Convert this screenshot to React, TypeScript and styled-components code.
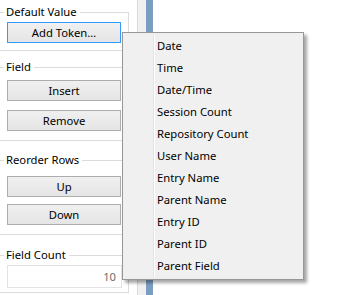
import React from 'react';
import styled, { createGlobalStyle } from 'styled-components';

const Global = createGlobalStyle`
  html, body {
    margin: 0;
    padding: 0;
    overflow: hidden;
    background: #fff;
  }
  body {
    font-family: 'Noto Sans', 'Open Sans', sans-serif;
    font-size: 11.25px;
    color: #000;
  }
`;

const TOKENS = [
  'Date',
  'Time',
  'Date/Time',
  'Session Count',
  'Repository Count',
  'User Name',
  'Entry Name',
  'Parent Name',
  'Entry ID',
  'Parent ID',
  'Parent Field',
];

export default function App() {
  return (
    <>
      <Global />
      <Screen>
        <SidePanel>
          <Group $mt={0}>
            <GroupTitle>
              <span>Default Value</span>
            </GroupTitle>
            <GroupBody $pt={2} $pb={7} $gap={0}>
              <Button $focused>Add Token…</Button>
            </GroupBody>
          </Group>

          <Group $mt={8}>
            <GroupTitle>
              <span>Field</span>
            </GroupTitle>
            <GroupBody $pt={5} $pb={9} $gap={9}>
              <Button>Insert</Button>
              <Button>Remove</Button>
            </GroupBody>
          </Group>

          <Group $mt={11}>
            <GroupTitle>
              <span>Reorder Rows</span>
            </GroupTitle>
            <GroupBody $pt={8} $pb={9} $gap={7}>
              <Button>Up</Button>
              <Button>Down</Button>
            </GroupBody>
          </Group>

          <Group $mt={12}>
            <GroupTitle>
              <span>Field Count</span>
            </GroupTitle>
            <GroupBody $pt={2} $pb={4} $gap={0}>
              <CountInput>10</CountInput>
            </GroupBody>
          </Group>
        </SidePanel>
        <Gutter />
        <SplitBar />
        <Canvas />

        <Menu>
          <MenuList>
            {TOKENS.map((t) => (
              <MenuItem key={t}>{t}</MenuItem>
            ))}
          </MenuList>
        </Menu>
      </Screen>
    </>
  );
}

const Screen = styled.div`
  position: relative;
  display: flex;
  width: 342px;
  height: 295px;
  overflow: hidden;
`;

const SidePanel = styled.div`
  flex: 0 0 137px;
  padding-top: 4px;
  background: #fff;
  border-right: 1px solid #d9d9d9;
`;

const Gutter = styled.div`
  flex: 0 0 8px;
  background: #f0f0f0;
`;

const SplitBar = styled.div`
  flex: 0 0 7px;
  background: #7b9ec0;
`;

const Canvas = styled.div`
  flex: 1;
  background: #fff;
`;

const Group = styled.div<{ $mt: number }>`
  width: 129px;
  margin-top: ${({ $mt }) => $mt}px;
`;

const GroupTitle = styled.div`
  display: flex;
  height: 16px;
  line-height: 16px;
  white-space: nowrap;

  &::before {
    content: '';
    flex: 0 0 4px;
    margin-top: 8px;
    border-top: 1px solid #dcdcdc;
  }

  span {
    padding: 0 3px 0 2px;
  }

  &::after {
    content: '';
    flex: 1;
    margin-top: 8px;
    border-top: 1px solid #dcdcdc;
    border-right: 1px solid #dcdcdc;
  }
`;

const GroupBody = styled.div<{ $pt: number; $pb: number; $gap: number }>`
  display: flex;
  flex-direction: column;
  gap: ${({ $gap }) => $gap}px;
  padding: ${({ $pt }) => $pt}px 0 ${({ $pb }) => $pb}px 7px;
  border-right: 1px solid #dcdcdc;
  border-bottom: 1px solid #dcdcdc;
`;

const Button = styled.button<{ $focused?: boolean }>`
  box-sizing: border-box;
  width: 114px;
  height: 21px;
  padding: 0;
  border: 1px solid ${({ $focused }) => ($focused ? '#3399ff' : '#adadad')};
  border-radius: 0;
  background: linear-gradient(#f0f0f0, #e5e5e5);
  font: inherit;
  color: #000;
  line-height: 19px;
  text-align: center;
`;

const CountInput = styled.div`
  box-sizing: border-box;
  width: 115px;
  height: 23px;
  padding-right: 5px;
  border: 1px solid #e3e3e3;
  background: #fff;
  color: #6d6d6d;
  line-height: 21px;
  text-align: right;
`;

const Menu = styled.div`
  position: absolute;
  left: 122px;
  top: 32px;
  box-sizing: border-box;
  width: 182px;
  height: 248px;
  padding: 2px;
  border: 1px solid #979797;
  background: #f0f0f0;
  box-shadow: 3px 3px 3px rgba(0, 0, 0, 0.35);
`;

const MenuList = styled.div`
  margin-left: 28px;
  background: linear-gradient(to right, #e2e3e3 0 1px, #fff 1px 2px, transparent 2px);
`;

const MenuItem = styled.div`
  height: 22px;
  padding-left: 4px;
  line-height: 22px;
  white-space: nowrap;
`;
